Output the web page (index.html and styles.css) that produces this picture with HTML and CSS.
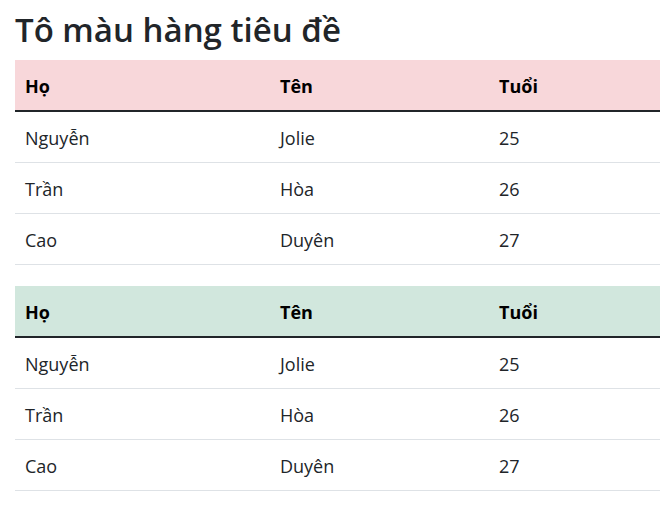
FILE: index.html
```html
<!DOCTYPE html>
<html lang="vi">
<head>
<meta charset="utf-8">
<title>Tô màu hàng tiêu đề</title>
<link rel="stylesheet" href="styles.css">
</head>
<body>
<div class="page">
  <h1 class="title">Tô màu hàng tiêu đề</h1>
  <table class="data-table">
    <thead class="head-danger">
      <tr><th class="col-1">Họ</th><th class="col-2">Tên</th><th class="col-3">Tuổi</th></tr>
    </thead>
    <tbody>
      <tr><td>Nguyễn</td><td>Jolie</td><td>25</td></tr>
      <tr><td>Trần</td><td>Hòa</td><td>26</td></tr>
      <tr><td>Cao</td><td>Duyên</td><td>27</td></tr>
    </tbody>
  </table>
  <table class="data-table">
    <thead class="head-success">
      <tr><th class="col-1">Họ</th><th class="col-2">Tên</th><th class="col-3">Tuổi</th></tr>
    </thead>
    <tbody>
      <tr><td>Nguyễn</td><td>Jolie</td><td>25</td></tr>
      <tr><td>Trần</td><td>Hòa</td><td>26</td></tr>
      <tr><td>Cao</td><td>Duyên</td><td>27</td></tr>
    </tbody>
  </table>
</div>
</body>
</html>
```
FILE: styles.css
```css
html, body {
  margin: 0;
  padding: 0;
  background: #fff;
}
body {
  font-family: "Open Sans", "Noto Sans", sans-serif;
  color: #212529;
  font-size: 18px;
}
.page {
  padding: 0 12px 0 15px;
}
.title {
  margin: 0 0 10px;
  padding-top: 10px;
  font-size: 33px;
  font-weight: 600;
  line-height: 40px;
}
.data-table {
  width: 100%;
  border-collapse: collapse;
  margin-bottom: 21px;
}
.data-table th,
.data-table td {
  text-align: left;
  padding: 13px 10px 11px;
  line-height: 26px;
  vertical-align: top;
}
.data-table th {
  font-weight: 700;
  color: #000;
  border-bottom: 2px solid #212529;
}
.data-table td {
  border-bottom: 1px solid #dee2e6;
}
.col-1 { width: 235px; }
.col-2 { width: 199px; }
.head-danger th { background: #f8d7da; }
.head-success th { background: #d1e7dd; }
```
